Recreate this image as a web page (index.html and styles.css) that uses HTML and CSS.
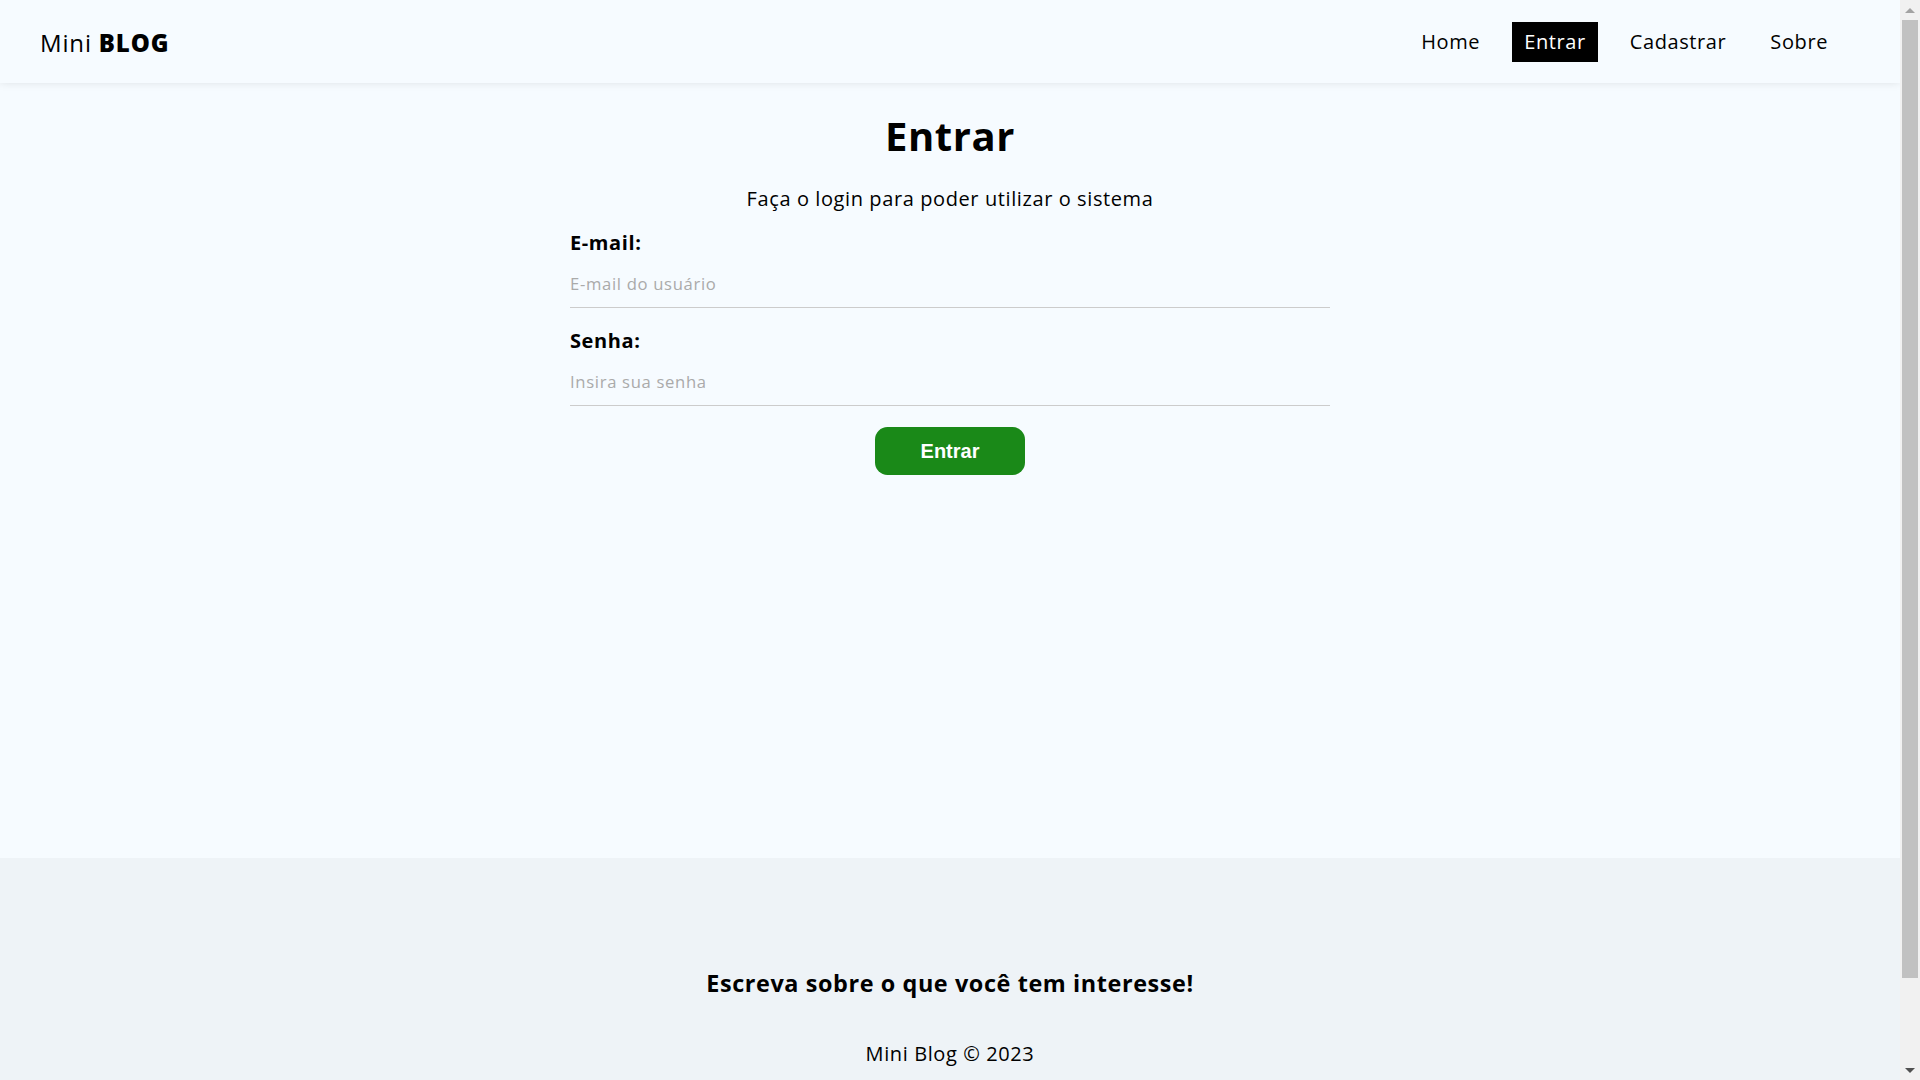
FILE: index.html
```html
<!DOCTYPE html>
<html lang="pt-BR">
<head>
<meta charset="utf-8">
<title>Mini Blog</title>
<link rel="stylesheet" href="styles.css">
</head>
<body>
  <nav class="navbar">
    <a href="#" class="brand">Mini <span>Blog</span></a>
    <ul class="links-list">
      <li><a href="#">Home</a></li>
      <li><a href="#" class="active">Entrar</a></li>
      <li><a href="#">Cadastrar</a></li>
      <li><a href="#">Sobre</a></li>
    </ul>
  </nav>
  <main class="container">
    <div class="login">
      <h1>Entrar</h1>
      <p>Faça o login para poder utilizar o sistema</p>
      <form>
        <label>
          <span>E-mail:</span>
          <input type="email" name="email" placeholder="E-mail do usuário">
        </label>
        <label>
          <span>Senha:</span>
          <input type="password" name="password" placeholder="Insira sua senha">
        </label>
        <button class="btn" type="button">Entrar</button>
      </form>
    </div>
  </main>
  <footer class="footer">
    <h3>Escreva sobre o que você tem interesse!</h3>
    <p>Mini Blog &copy; 2023</p>
  </footer>
  <div class="scrollbar" aria-hidden="true">
    <div class="sb-arrow sb-up"></div>
    <div class="sb-track"><div class="sb-thumb"></div></div>
    <div class="sb-arrow sb-down"></div>
  </div>
</body>
</html>
```
FILE: styles.css
```css
html {
  background-color: #f6fbff;
  scrollbar-width: none;
}

html::-webkit-scrollbar {
  display: none;
}

body {
  margin: 0 20px 0 0;
  background-color: #f6fbff;
  font-family: "Open Sans", "DejaVu Sans", sans-serif;
  font-size: 20px;
  line-height: 24px;
  letter-spacing: 0.03em;
  color: #000;
}

a {
  color: #000;
  text-decoration: none;
}

/* Navbar */
.navbar {
  display: flex;
  justify-content: space-between;
  align-items: center;
  padding: 10px 40px;
  height: 83px;
  box-sizing: border-box;
  box-shadow: rgba(0, 0, 0, 0.15) 0px -2px 10px 0px;
  position: relative;
}

.brand {
  font-size: 24px;
  line-height: 29px;
  padding-top: 1px;
  letter-spacing: 0.035em;
}

.brand span {
  font-weight: 800;
  text-transform: uppercase;
}

.links-list {
  display: flex;
  list-style: none;
  margin: 0;
  padding: 0;
}

.links-list li {
  margin-right: 20px;
}

.links-list a {
  display: block;
  padding: 8px 12px;
  line-height: 24px;
}

.links-list a.active {
  background-color: #000;
  color: #fff;
}

/* Main */
.container {
  min-height: 775px;
}

.login {
  text-align: center;
  padding-top: 28px;
}

.login h1 {
  font-size: 40px;
  line-height: 49px;
  font-weight: 700;
  letter-spacing: 0.015em;
  margin: 0 0 27px;
}

.login p {
  margin: 0 0 20px;
}

form {
  width: 40%;
  margin: 0 auto;
}

form label {
  display: flex;
  flex-direction: column;
  margin-bottom: 21px;
}

form label span {
  font-weight: 700;
  margin-bottom: 6px;
  text-align: left;
}

form input {
  box-sizing: border-box;
  border: none;
  border-bottom: 1px solid #ccc;
  padding: 13px 0;
  background-color: transparent;
  font-family: inherit;
  font-size: 16.67px;
  line-height: 20px;
  letter-spacing: 0.04em;
  outline: none;
}

form input::placeholder {
  color: #aaa;
}

.btn {
  background-color: #1a8918;
  color: #fff;
  border: none;
  border-radius: 12.5px;
  width: 150px;
  height: 48px;
  padding: 0;
  font-family: "Liberation Sans", Arial, sans-serif;
  font-weight: 700;
  font-size: 20px;
  letter-spacing: 0;
  cursor: pointer;
}

/* Footer */
.footer {
  display: flex;
  flex-direction: column;
  align-items: center;
  justify-content: center;
  background-color: #eef3f7;
  height: 317px;
  box-sizing: border-box;
  padding-top: 2px;
}

.footer h3 {
  font-size: 23.4px;
  line-height: 28.5px;
  font-weight: 700;
  margin: 0 0 44px;
}

.footer p {
  margin: 0;
}

/* Browser scrollbar look-alike (overlay on the right edge) */
.scrollbar {
  position: fixed;
  top: 0;
  right: 0;
  width: 20px;
  height: 100vh;
  background: #f1f1f1;
  display: flex;
  flex-direction: column;
}

.sb-arrow {
  height: 20px;
  flex: none;
  display: flex;
  justify-content: center;
  align-items: center;
}

.sb-arrow::before {
  content: "";
  width: 0;
  height: 0;
  border-left: 5px solid transparent;
  border-right: 5px solid transparent;
}

.sb-up::before {
  border-bottom: 5px solid #a3a3a3;
}

.sb-down::before {
  border-top: 5px solid #505050;
}

.sb-track {
  flex: 1;
  padding: 0 2px 0 2px;
}

.sb-thumb {
  height: 958px;
  background: #c1c1c1;
}
```
